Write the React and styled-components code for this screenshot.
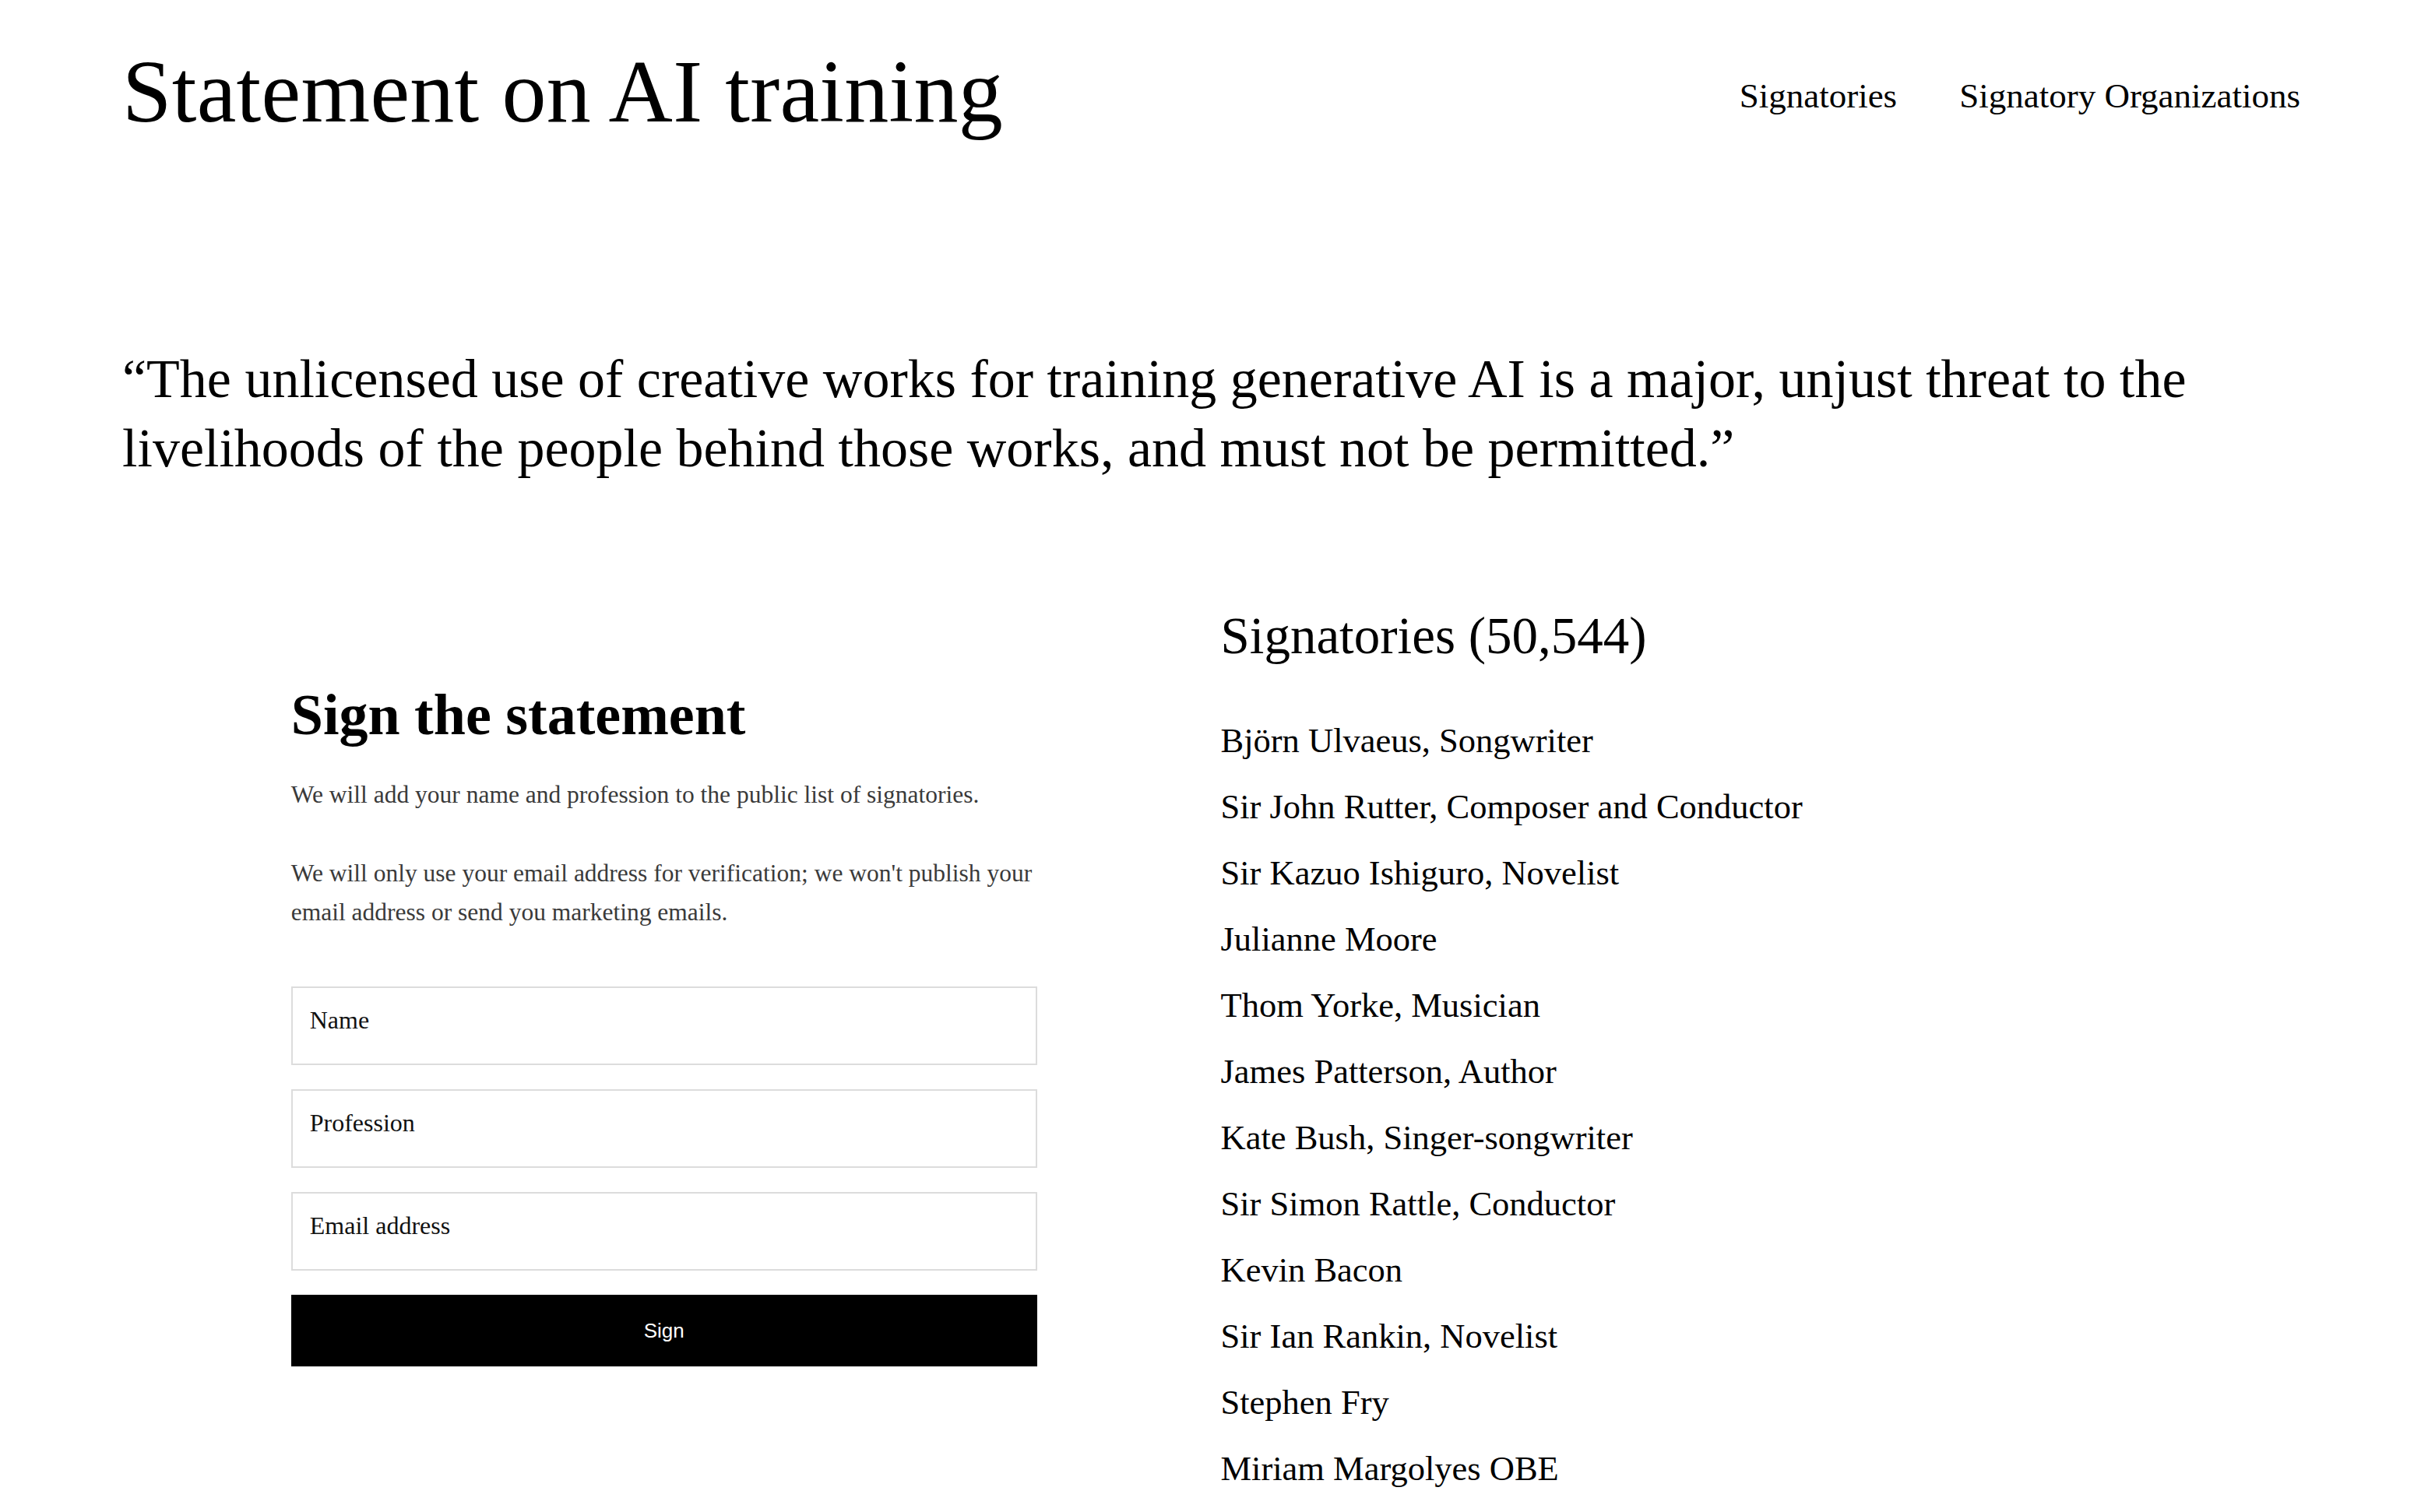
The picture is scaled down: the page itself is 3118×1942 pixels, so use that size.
import React from 'react';
import styled, { createGlobalStyle } from 'styled-components';

const signatories = [
  'Björn Ulvaeus, Songwriter',
  'Sir John Rutter, Composer and Conductor',
  'Sir Kazuo Ishiguro, Novelist',
  'Julianne Moore',
  'Thom Yorke, Musician',
  'James Patterson, Author',
  'Kate Bush, Singer-songwriter',
  'Sir Simon Rattle, Conductor',
  'Kevin Bacon',
  'Sir Ian Rankin, Novelist',
  'Stephen Fry',
  'Miriam Margolyes OBE',
];

function App() {
  return (
    <Page>
      <GlobalStyle />
      <Header>
        <Title>Statement on AI training</Title>
        <Nav>
          <NavLink href="#signatories">Signatories</NavLink>
          <NavLink href="#organizations">Signatory Organizations</NavLink>
        </Nav>
      </Header>

      <Quote>
        “The unlicensed use of creative works for training generative AI is a major, unjust threat to
        the livelihoods of the people behind those works, and must not be permitted.”
      </Quote>

      <Columns>
        <FormColumn>
          <SignForm onSubmit={e => e.preventDefault()}>
            <FormTitle>Sign the statement</FormTitle>
            <FormText>We will add your name and profession to the public list of signatories.</FormText>
            <FormText>
              We will only use your email address for verification; we won't publish your email
              address or send you marketing emails.
            </FormText>
            <Fields>
              <Field type="text" placeholder="Name" />
              <Field type="text" placeholder="Profession" />
              <Field type="email" placeholder="Email address" />
              <SignButton type="submit">Sign</SignButton>
            </Fields>
          </SignForm>
        </FormColumn>

        <ListColumn id="signatories">
          <ListTitle>Signatories (50,544)</ListTitle>
          <SignatoryList>
            {signatories.map(name => (
              <Signatory key={name}>{name}</Signatory>
            ))}
          </SignatoryList>
        </ListColumn>
      </Columns>
    </Page>
  );
}

export default App;

const GlobalStyle = createGlobalStyle`
  * {
    box-sizing: border-box;
  }

  body {
    margin: 0;
    background: #fff;
    color: #000;
    font-family: "Liberation Serif", "Times New Roman", serif;
  }
`;

const Page = styled.div`
  padding: 61px 164px 0 157px;
  height: 1942px;
  overflow: hidden;
`;

const Header = styled.header`
  display: flex;
  justify-content: space-between;
  align-items: flex-start;
`;

const Title = styled.h1`
  margin: 0;
  font-size: 114px;
  font-weight: 400;
  line-height: 1;
  letter-spacing: 0.3px;
`;

const Nav = styled.nav`
  display: flex;
  gap: 80px;
  margin-top: 40px;
`;

const NavLink = styled.a`
  color: #000;
  font-size: 45px;
  line-height: 1;
  text-decoration: none;
`;

const Quote = styled.p`
  margin: 267px 0 0;
  font-size: 70px;
  line-height: 89px;
`;

const Columns = styled.div`
  display: grid;
  grid-template-columns: 1fr 1fr;
  column-gap: 14px;
  margin-top: 163px;
`;

const FormColumn = styled.div`
  display: flex;
  justify-content: center;
`;

const SignForm = styled.form`
  width: 958px;
  padding-top: 98px;
`;

const FormTitle = styled.h2`
  margin: 0 0 41px;
  font-size: 74px;
  font-weight: 700;
  line-height: 1;
`;

const FormText = styled.p`
  margin: 0 0 51px;
  color: #3a3a3a;
  font-size: 31.5px;
  line-height: 50px;

  &:last-of-type {
    margin-bottom: 70px;
  }
`;

const Fields = styled.div`
  display: flex;
  flex-direction: column;
  gap: 31px;
`;

const Field = styled.input`
  width: 100%;
  height: 101px;
  padding: 0 22px 14px;
  border: 2px solid #dcdcdc;
  border-radius: 0;
  background: #fff;
  color: #000;
  font-family: "Liberation Serif", "Times New Roman", serif;
  font-size: 32px;
  outline: none;

  &::placeholder {
    color: #111;
    opacity: 1;
  }
`;

const SignButton = styled.button`
  width: 100%;
  height: 92px;
  border: none;
  border-radius: 0;
  background: #000;
  color: #fff;
  font-family: "Liberation Sans", Arial, sans-serif;
  font-size: 26px;
  cursor: pointer;
`;

const ListColumn = styled.section`
  padding-left: 5px;
`;

const ListTitle = styled.h2`
  margin: 0 0 59px;
  font-size: 67px;
  font-weight: 400;
  line-height: 1;
`;

const SignatoryList = styled.ul`
  margin: 0;
  padding: 0;
  list-style: none;
`;

const Signatory = styled.li`
  font-size: 44.5px;
  line-height: 85px;
`;
